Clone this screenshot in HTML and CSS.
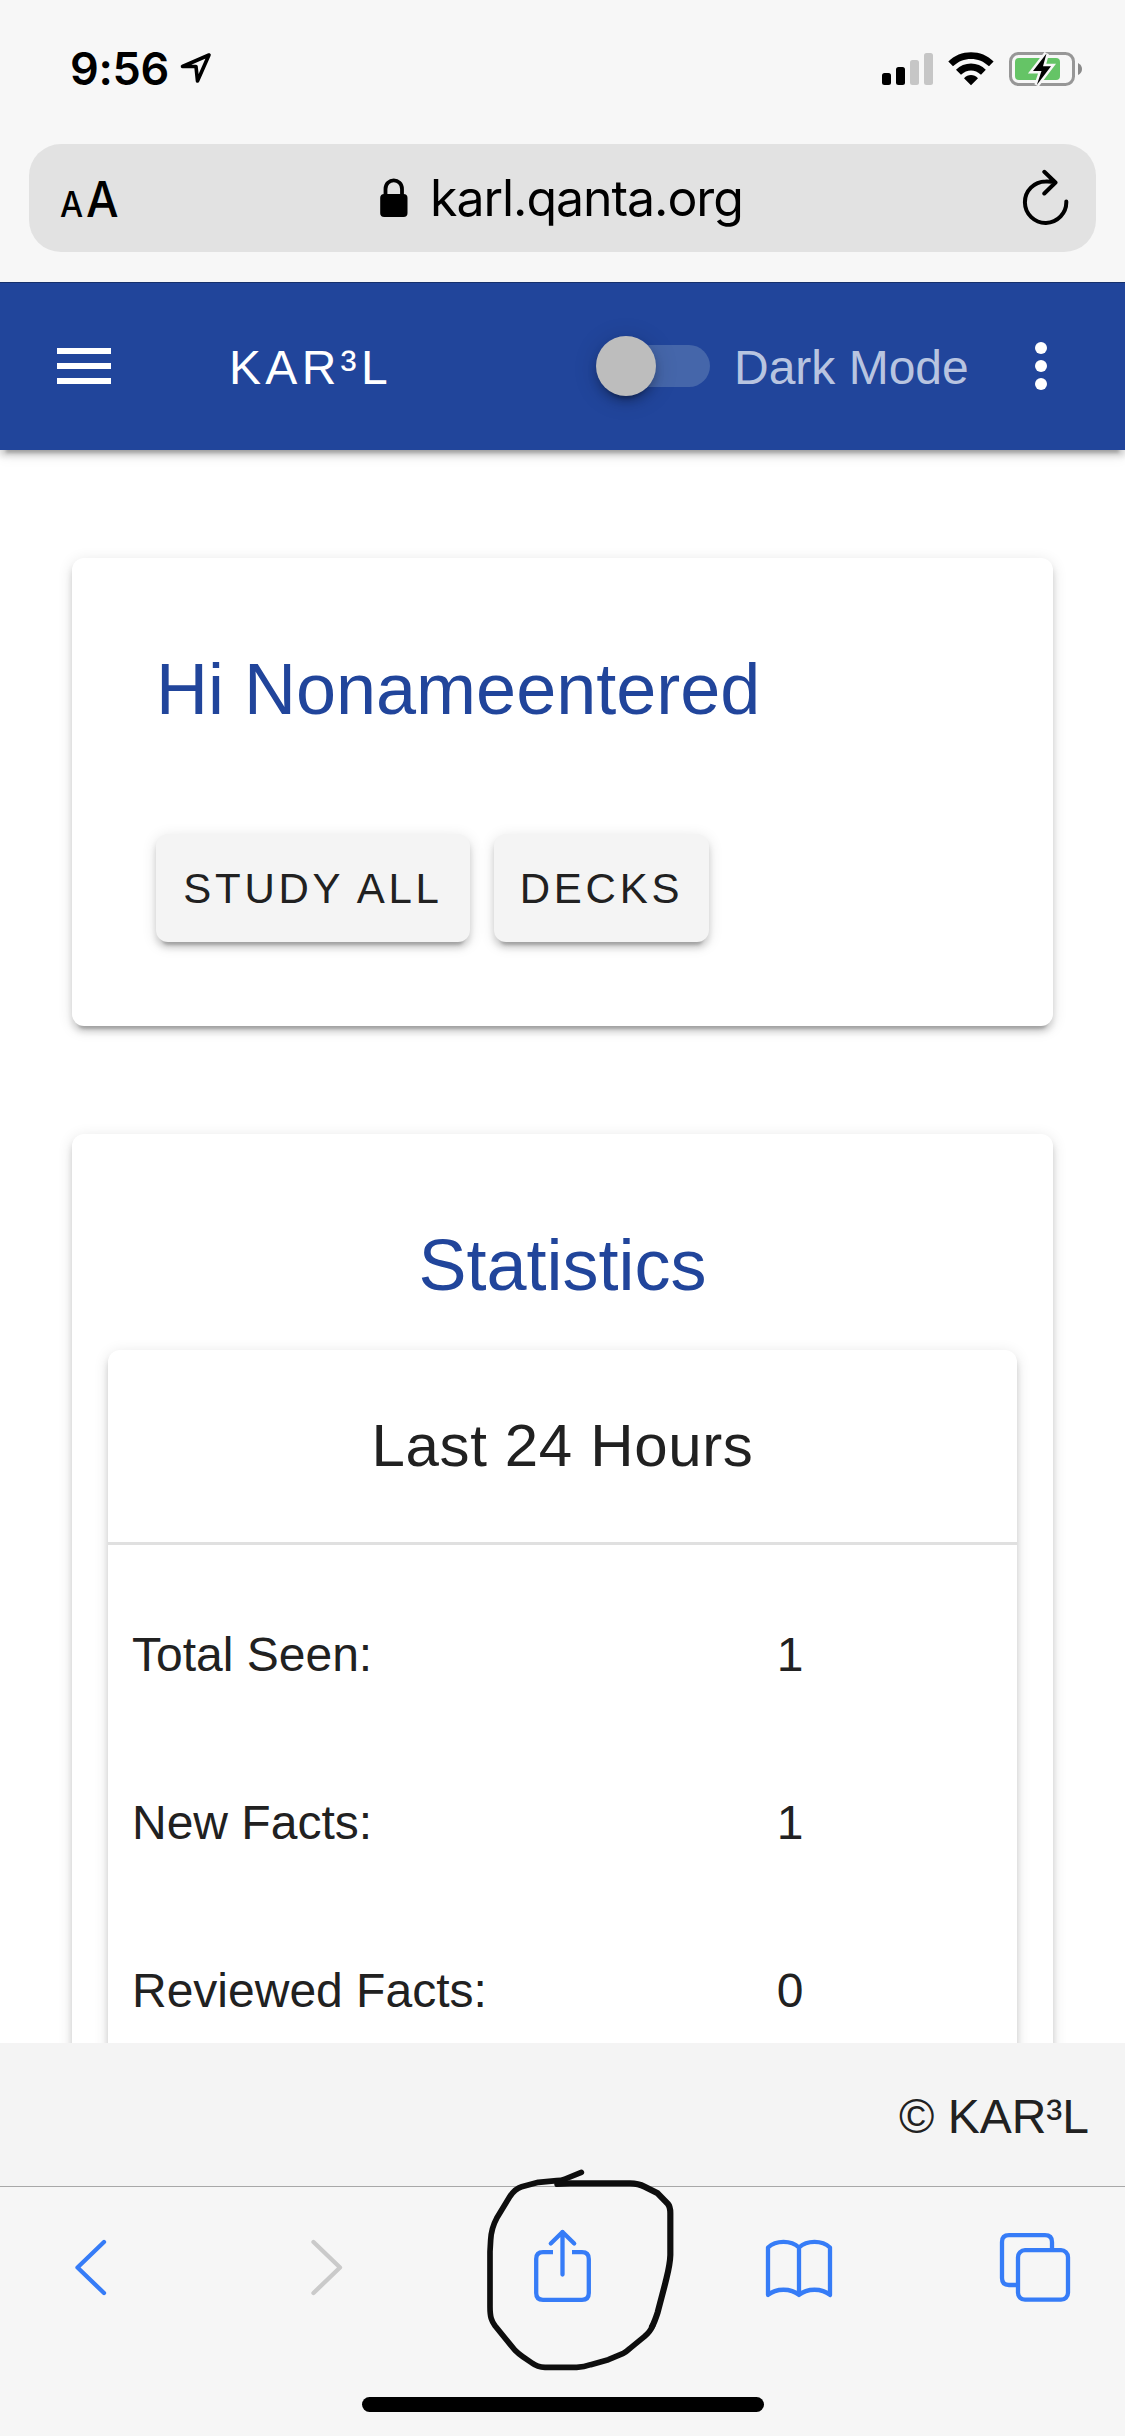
FILE: index.html
```html
<!DOCTYPE html>
<html lang="en">
<head>
<meta charset="utf-8">
<title>KAR³L</title>
<link rel="stylesheet" href="styles.css">
</head>
<body>
<div class="phone">
  <div class="status">
    <span class="time">9:56</span>
    <svg class="locate" width="34" height="34" viewBox="0 0 34 34"><path d="M30 4 3.500 15.500H17L18.500 30Z" fill="none" stroke="#000" stroke-width="3.600" stroke-linejoin="round"/></svg>
    <svg class="indicators" width="204" height="38" viewBox="880 50 204 38">
      <g><rect x="882" y="73" width="9" height="12" rx="2.500"/><rect x="896" y="67" width="9" height="18" rx="2.500"/></g>
      <g fill="#c6c6c6"><rect x="910" y="60" width="9" height="25" rx="2.500"/><rect x="924" y="53" width="9" height="32" rx="2.500"/></g>
      <path d="M948.300 61.500C960 49 982 49 993.600 61.500L989 66.300C979 56.500 963 56.500 953 66.300ZM956 69.800C964 61.500 978 61.500 985.800 69.800L981 74.800C975 69 967 69 961 74.800ZM964 78.200C968 74 974 74 978 78.200L971 85.300Z"/>
      <rect x="1010.500" y="53.500" width="63" height="31" rx="8" fill="none" stroke="#979797" stroke-width="3"/>
      <path d="M1078 63V75Q1082 73 1082 69T1078 63Z" fill="#8a8a8a"/>
      <rect x="1015" y="58" width="45" height="22" rx="4" fill="#65c466"/>
      <path d="M1046.500 53.500 1033 71H1041.500L1036.800 85 1051 66.300H1043Z" stroke="#f7f7f7" stroke-width="5"/>
      <path d="M1046.500 53.500 1033 71H1041.500L1036.800 85 1051 66.300H1043Z"/>
    </svg>
  </div>
  <div class="address">
    <div class="reader"><span class="small-a">A</span><span class="big-a">A</span></div>
    <div class="site">
      <svg width="28" height="40" viewBox="0 0 28 40"><path d="M5.500 18V11C5.500 -.5 22 -.5 22 11V18" fill="none" stroke="#000" stroke-width="3.800"/><rect x=".2" y="16" width="27.300" height="23" rx="4"/></svg>
      <span class="domain">karl.qanta.org</span>
    </div>
    <svg class="reload" width="48" height="58" viewBox="1022 170 48 58"><path d="M1066.300 202.500A20.700 20.700 0 1 1 1045.600 182.500Q1051 182.300 1055 183.300M1044.300 172.800 1055.500 183.500 1044.300 194.500" fill="none" stroke="#000" stroke-width="4" stroke-linecap="round" stroke-linejoin="round"/></svg>
  </div>

  <header class="appbar">
    <div class="menu"><i></i><i></i><i></i></div>
    <span class="brand">KAR³L</span>
    <div class="switch"><i class="knob"></i></div>
    <span class="mode">Dark Mode</span>
    <div class="more"><i></i><i></i><i></i></div>
  </header>

  <main class="content">
    <section class="card welcome">
      <h1>Hi Nonameentered</h1>
      <div class="actions"><button class="btn study">STUDY ALL</button><button class="btn decks">DECKS</button></div>
    </section>
    <section class="card stats">
      <h1>Statistics</h1>
      <div class="card panel">
        <h2>Last 24 Hours</h2>
        <dl>
          <div class="row"><dt>Total Seen:</dt><dd>1</dd></div>
          <div class="row"><dt>New Facts:</dt><dd>1</dd></div>
          <div class="row"><dt>Reviewed Facts:</dt><dd>0</dd></div>
        </dl>
      </div>
    </section>
  </main>
  <footer class="footer"><span>© KAR³L</span></footer>

  <nav class="toolbar">
    <div class="tools">
      <svg width="36" height="80" viewBox="72 2227 36 80"><path d="M104 2242 77.500 2267.500 104 2293"/></svg>
      <svg class="off" width="36" height="80" viewBox="309 2227 36 80"><path d="M313.500 2242 340 2267.500 313.500 2293"/></svg>
      <svg width="62" height="80" viewBox="531 2227 62 80"><path stroke-linecap="butt" d="M553 2252.200H543Q536.200 2252.200 536.200 2259V2293Q536.200 2299.800 543 2299.800H582Q588.800 2299.800 588.800 2293V2259Q588.800 2252.200 582 2252.200H572"/><path d="M562.500 2274.500V2232M550.800 2243.500 562.500 2232 574.200 2243.500"/></svg>
      <svg width="70" height="80" viewBox="764 2227 70 80"><path d="M799 2247.500C791 2240 776 2240 768 2247.500V2295C776 2288 791 2288 799 2295C807 2288 822 2288 830 2295V2247.500C822 2240 807 2240 799 2247.500V2295"/></svg>
      <svg width="74" height="80" viewBox="998 2227 74 80"><rect x="1018" y="2250.200" width="50" height="49.500" rx="7"/><path stroke-linecap="butt" d="M1052 2249V2242Q1052 2235.200 1045 2235.200H1009Q1002 2235.200 1002 2242V2278Q1002 2285 1009 2285H1017"/></svg>
    </div>
    <div class="home"></div>
  </nav>

  <svg class="scribble" width="260" height="240" viewBox="0 0 780 720" fill="none" stroke="#0e0e0e" stroke-linecap="round" stroke-linejoin="round">
    <path stroke-width="17" d="M394 97 345 117Q335 121 320 122L265 127 215 140Q195 146 180 169L140 235Q124 264 122 300L120 335V500C120 532 125 544 135 557L195 631Q206 642 218 650L246 669Q262 681 285 682H380Q402 681 422 674L475 659 518 641Q528 636 540 625L583 590Q602 573 608 557"/>
    <path stroke-width="18.500" d="M322 132 360 130H540Q565 130 584 140L623 160 653 191Q661 200 661 220V345C660 380 650 410 645 433L623 517Q614 545 606 560"/>
  </svg>
</div>
</body>
</html>
```
FILE: styles.css
```css
* { box-sizing: border-box; }
body { margin: 0; background: #fff; }
i { display: block; }

.phone {
  position: relative;
  display: flex;
  flex-direction: column;
  width: 1125px;
  height: 2436px;
  overflow: hidden;
  background: #f7f7f7;
  color: #212121;
  font-family: "Liberation Sans", Arial, sans-serif;
  font-size: 48px;
}

/* Browser chrome, top */
.status {
  display: flex;
  align-items: flex-start;
  height: 144px;
  padding: 50px 41px 0 70px;
  color: #000;
}
.time {
  width: 109px;
  font: 600 45px/38px Inter, sans-serif;
  letter-spacing: -.3px;
}
.locate { margin: 1px 0 0; }
.indicators { margin-left: auto; }

.address {
  display: flex;
  align-items: center;
  height: 108px;
  margin: 0 29px;
  padding: 0 26px 0 31px;
  border-radius: 32px;
  background: #e2e2e2;
  color: #000;
  font-family: Inter, sans-serif;
}
.reader {
  display: flex;
  align-items: baseline;
  gap: 3px;
  width: 320px;
  padding-top: 2px;
  transform: scaleX(.92);
  transform-origin: left;
  font-weight: 500;
}
.small-a { font-size: 35.5px; }
.big-a { font-size: 50px; }
.site { display: flex; align-items: center; gap: 22px; }
.domain { font-size: 50px; line-height: 60px; letter-spacing: -1.05px; }
.reload { margin-left: auto; }

/* App bar */
.appbar {
  position: relative;
  z-index: 1;
  display: flex;
  align-items: center;
  height: 168px;
  margin-top: 30px;
  padding: 0 78px 1px 57px;
  border-top: 1px solid #16306c;
  background: #21459b;
  box-shadow: 0 9px 3px -6px rgba(0,0,0,.2), 0 6px 6px 0 rgba(0,0,0,.14), 0 3px 15px 0 rgba(0,0,0,.12);
  clip-path: inset(0 0 -30px 0);
  color: #fff;
}
.menu { display: grid; gap: 9px; width: 54px; margin-right: 118px; }
.menu i { height: 6px; background: #fff; }
.brand { width: 373px; padding-top: 2px; letter-spacing: 4.3px; }
.switch {
  width: 108px;
  height: 42px;
  border-radius: 21px;
  background: #4566aa;
}
.knob {
  width: 60px;
  height: 60px;
  margin: -9px 0 0 -6px;
  border-radius: 50%;
  background: #bdbdbd;
  box-shadow: 0 9px 3px -6px rgba(0,0,0,.2), 0 6px 9px 0 rgba(0,0,0,.2), 0 3px 24px 0 rgba(0,0,0,.16);
}
.mode { margin-left: 24px; padding-top: 2px; color: #b8c4e0; }
.more { display: grid; gap: 6px; margin-left: auto; }
.more i { width: 12px; height: 12px; border-radius: 50%; background: #fff; }

/* Page */
.content {
  flex: none;
  height: 1593px;
  padding: 108px 72px 0;
  overflow: hidden;
  background: #fff;
}
.card {
  border-radius: 12px;
  background: #fff;
  box-shadow: 0 9px 3px -6px rgba(0,0,0,.2), 0 6px 6px 0 rgba(0,0,0,.14), 0 3px 15px 0 rgba(0,0,0,.12);
}
h1, h2, dl, dd { margin: 0; font-weight: 400; }
h1 { color: #21459b; font-size: 72px; line-height: 96px; }
.welcome { height: 468px; padding: 83px 84px; }
.actions { display: flex; gap: 24px; margin-top: 97px; }
.btn {
  height: 108px;
  padding: 2px 0 0;
  border: 0;
  border-radius: 12px;
  background: #f4f4f4;
  box-shadow: 0 9px 3px -6px rgba(0,0,0,.2), 0 6px 6px 0 rgba(0,0,0,.14), 0 3px 15px 0 rgba(0,0,0,.12);
  color: #212121;
  font: 42px "Liberation Sans", Arial, sans-serif;
  letter-spacing: 3.75px;
}
.study { width: 314px; }
.decks { width: 215px; }
.stats { height: 1100px; margin-top: 108px; padding: 83px 36px; text-align: center; }
.panel { height: 900px; margin-top: 37px; }
h2 {
  height: 195px;
  border-bottom: 3px solid #e0e0e0;
  font-size: 60px;
  line-height: 192px;
  letter-spacing: .65px;
}
dl { padding-top: 26px; }
.row {
  display: grid;
  grid-template-columns: 455px 454px;
  height: 168px;
  line-height: 168px;
}
dt { padding-left: 24px; text-align: left; }

.footer {
  display: flex;
  align-items: center;
  justify-content: flex-end;
  height: 143px;
  padding: 3px 36px 0;
  background: #f4f4f4;
}

/* Browser chrome, bottom */
.toolbar {
  height: 250px;
  padding-top: 40px;
  border-top: 1px solid #a8a8a8;
  background: #f6f6f6;
}
.tools {
  display: grid;
  grid-template-columns: 237px 222px 233px 234px 74px;
  padding-left: 72px;
}
.tools svg {
  fill: none;
  stroke: #367cf7;
  stroke-width: 4.3px;
  stroke-linecap: round;
  stroke-linejoin: round;
}
.tools .off { stroke: #cacaca; }
.home {
  width: 402px;
  height: 15px;
  margin: 90px auto 0;
  border-radius: 8px;
  background: #000;
}
/* Hand-drawn ring over the share button */
.scribble { position: absolute; left: 450px; top: 2140px; }
```
